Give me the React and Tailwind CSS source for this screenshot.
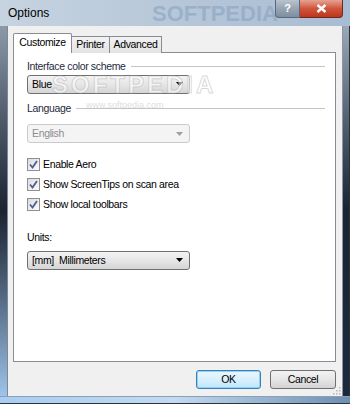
import React from "react";

const font = { fontFamily: '"Liberation Sans", Arial, sans-serif' };
const txt = "text-[10.5px] tracking-[-0.35px]";

function Arrow({ disabled }) {
  return (
    <svg width="7" height="4" viewBox="0 0 7 4">
      <path d="M0 0H7L3.5 4Z" fill={disabled ? "#a0a0a0" : "#000"} />
    </svg>
  );
}

function Combo({ text, disabled }) {
  return (
    <div
      className={`w-[163px] h-[19px] rounded-[3px] border flex items-center justify-between pl-[4px] pr-[6px] ${txt} ${
        disabled
          ? "border-[#c7cbcf] bg-[#f4f4f4] text-[#8d8d8d]"
          : "border-[#707070] bg-gradient-to-b from-[#f3f3f3] via-[#e6e6e6] to-[#d5d5d5] text-black"
      }`}
    >
      <span className="leading-none whitespace-pre">{text}</span>
      <Arrow disabled={disabled} />
    </div>
  );
}

function Check({ label }) {
  return (
    <div className="flex items-center gap-[3px] h-[14px]">
      <div className="w-[13px] h-[13px] border border-[#8e8f8f] bg-gradient-to-br from-[#dcdcdc] to-[#fbfbfb] flex items-center justify-center">
        <svg width="9" height="9" viewBox="0 0 9 9">
          <path d="M1 4.5L3.5 7.5L8 1" stroke="#4a5f97" strokeWidth="1.8" fill="none" />
        </svg>
      </div>
      <span className={`${txt} leading-none text-black`}>{label}</span>
    </div>
  );
}

function GroupLabel({ text }) {
  return (
    <div className="flex items-center gap-[5px] pr-[10px]">
      <span className={`${txt} leading-none text-[#1e2a3b]`}>{text}</span>
      <div className="flex-1 border-t border-[#c4c4c4] border-b-white border-b h-0 mt-[2px]" />
    </div>
  );
}

export default function App() {
  return (
    <div
      className="w-[350px] h-[404px] relative overflow-hidden flex flex-col bg-[#b9c8d8]"
      style={font}
    >
      {/* title bar */}
      <div className="h-[26px] flex items-start relative bg-gradient-to-r from-[#c6d3e0] via-[#b6c7d9] to-[#a8bcd2]">
        <span className="absolute left-[152px] top-[3px] text-[22px] font-bold text-[#8aa3c0] opacity-60 leading-none">
          SOFTPEDIA
        </span>
        <span className="relative ml-[8px] mt-[7px] text-[12px] leading-none text-black">Options</span>
        <div className="relative ml-auto mr-[7px] flex h-[18px]">
          <div className="w-[25px] h-[18px] rounded-bl-[4px] border border-[#5d6775] border-t-0 bg-gradient-to-b from-[#b9c3ce] via-[#97a4b3] to-[#7f8e9f] flex items-center justify-center text-white text-[11px] font-bold">
            ?
          </div>
          <div className="w-[43px] h-[18px] rounded-br-[4px] border border-[#6b2a22] border-t-0 border-l-0 bg-gradient-to-b from-[#e5a293] via-[#d0543c] to-[#c0341c] flex items-center justify-center">
            <svg width="11" height="9" viewBox="0 0 11 9">
              <path d="M1.5 1L9.5 8M9.5 1L1.5 8" stroke="#fff" strokeWidth="2.4" />
            </svg>
          </div>
        </div>
      </div>

      <div className="flex flex-1">
        {/* left frame */}
        <div className="w-[8px] bg-gradient-to-b from-[#8b99a8] via-[#1c2432] to-[#9ec4ea] flex justify-end">
          <div className="w-[1px] bg-[#7a8898]" />
        </div>

        {/* client */}
        <div className="flex-1 bg-[#f0f0f0] flex flex-col pt-[7px] pl-[5px] pr-[6px] relative">
          {/* tabs */}
          <div className={`flex items-end h-[20px] ${txt} relative z-10`}>
            <div className="w-[59px] h-[20px] bg-white border border-[#898c95] border-b-0 rounded-t-[2px] flex items-center justify-center pb-[1px] text-black">
              Customize
            </div>
            <div className="w-[38px] h-[17px] bg-gradient-to-b from-[#f2f2f2] to-[#e3e3e3] border border-[#898c95] border-l-0 border-b-0 flex items-center justify-center text-black">
              Printer
            </div>
            <div className="w-[52px] h-[17px] bg-gradient-to-b from-[#f2f2f2] to-[#e3e3e3] border border-[#898c95] border-l-0 border-b-0 flex items-center justify-center text-black">
              Advanced
            </div>
          </div>
          {/* panel */}
          <div className="h-[310px] -mt-[1px] bg-white border border-[#898c95] pl-[13px] pt-[8px] flex flex-col relative">
            <GroupLabel text="Interface color scheme" />
            <div className="mt-[3px]">
              <Combo text="Blue" />
            </div>
            <div className="mt-[9px]">
              <GroupLabel text="Language" />
            </div>
            <div className="mt-[11px]">
              <Combo text="English" disabled />
            </div>
            <div className="mt-[14px] flex flex-col gap-[6px]">
              <Check label="Enable Aero" />
              <Check label="Show ScreenTips on scan area" />
              <Check label="Show local toolbars" />
            </div>
            <span className={`mt-[21px] ${txt} leading-none text-black`}>Units:</span>
            <div className="mt-[8px]">
              <Combo text="[mm]  Millimeters" />
            </div>
            {/* watermark overlay */}
            <span className="absolute z-10 pointer-events-none left-[38px] top-[20px] text-[24px] font-bold tracking-[3px] text-white/60 leading-none [-webkit-text-stroke:1px_rgba(170,170,170,0.45)]">
              SOFTPEDIA
            </span>
            <span className="absolute z-10 pointer-events-none left-[72px] top-[48px] text-[9px] text-[#d4d4d4]/80 leading-none">
              www.softpedia.com
            </span>
          </div>
          {/* buttons */}
          <div className="flex justify-end gap-[9px] mt-[8px]">
            <div className={`w-[65px] h-[19px] rounded-[3px] border border-[#3c7fb1] bg-gradient-to-b from-[#eaf6fd] via-[#d9f0fc] to-[#bee6fd] shadow-[inset_0_0_0_1px_#8fd1f7] flex items-center justify-center ${txt} text-black`}>
              OK
            </div>
            <div className={`w-[66px] h-[19px] rounded-[3px] border border-[#707070] bg-gradient-to-b from-[#f2f2f2] via-[#e6e6e6] to-[#d3d3d3] flex items-center justify-center ${txt} text-black`}>
              Cancel
            </div>
          </div>
          <svg className="absolute right-[1px] bottom-[1px]" width="10" height="10" viewBox="0 0 10 10">
            {[
              [8, 2], [8, 5], [5, 5], [8, 8], [5, 8], [2, 8],
            ].map(([x, y], i) => (
              <rect key={i} x={x} y={y} width="1.5" height="1.5" fill="#b8b8b8" />
            ))}
          </svg>
        </div>

        {/* right frame */}
        <div className="w-[8px] bg-gradient-to-b from-[#9aa8b8] via-[#1a2333] to-[#1e2a3c] flex">
          <div className="w-[1px] bg-[#8a96a4]" />
          <div className="flex-1" />
          <div className="w-[1px] bg-[#2a3038]" />
        </div>
      </div>
      {/* bottom frame */}
      <div className="h-[8px] bg-gradient-to-r from-[#a9cdf0] via-[#c3daf0] to-[#6f8fb0] border-t border-[#8aa0b8] border-b border-b-[#2a3440]" />
    </div>
  );
}
